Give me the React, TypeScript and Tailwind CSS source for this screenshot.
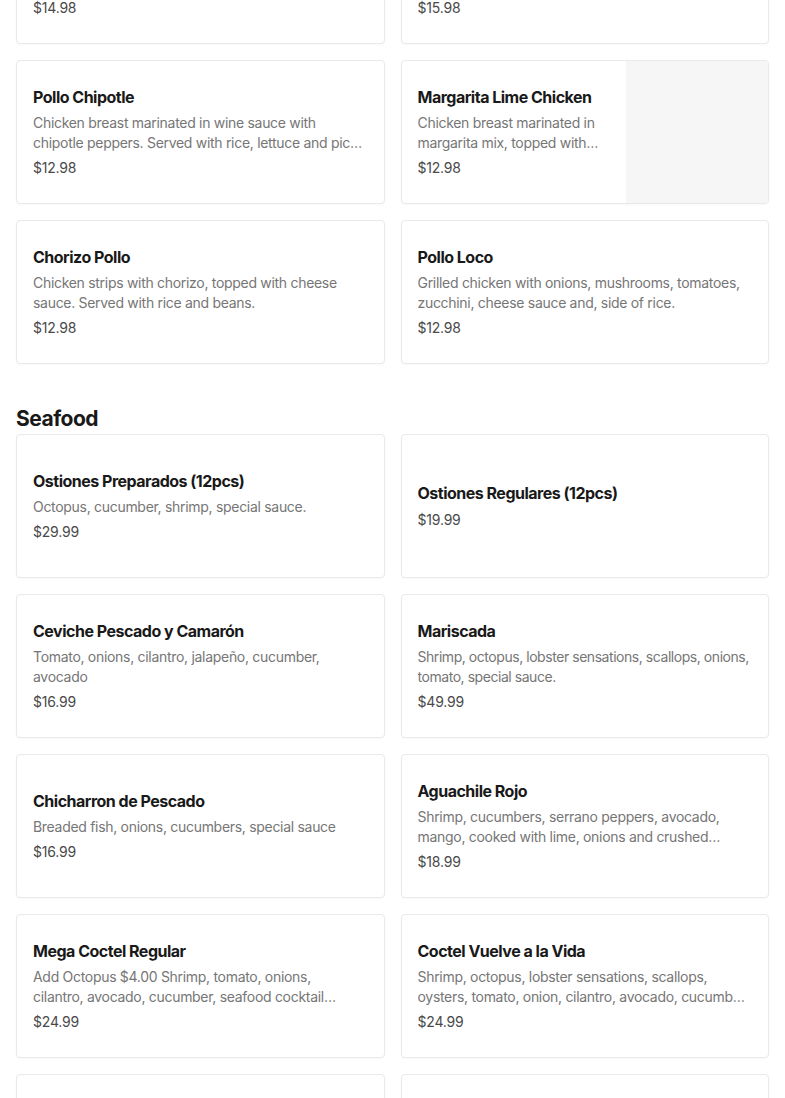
import React from "react";

type Item = { title: string; desc?: string; price: string; image?: boolean; tight?: boolean };

const chicken: Item[] = [
  { title: "Pollo a la Crema", desc: "Chicken strips cooked in a creamy sauce with onions. Served with rice and beans.", price: "$14.98" },
  { title: "Pollo Fundido", desc: "Grilled chicken topped with melted cheese and peppers. Served with rice.", price: "$15.98" },
  { title: "Pollo Chipotle", desc: "Chicken breast marinated in wine sauce with chipotle peppers. Served with rice, lettuce and pico de gallo.", price: "$12.98" },
  { title: "Margarita Lime Chicken", desc: "Chicken breast marinated in margarita mix, topped with shrimp and cheese sauce.", price: "$12.98", image: true },
  { title: "Chorizo Pollo", desc: "Chicken strips with chorizo, topped with cheese sauce. Served with rice and beans.", price: "$12.98" },
  { title: "Pollo Loco", desc: "Grilled chicken with onions, mushrooms, tomatoes, zucchini, cheese sauce and, side of rice.", price: "$12.98" },
];

const seafood: Item[] = [
  { title: "Ostiones Preparados (12pcs)", desc: "Octopus, cucumber, shrimp, special sauce.", price: "$29.99" },
  { title: "Ostiones Regulares (12pcs)", price: "$19.99" },
  { title: "Ceviche Pescado y Camarón", desc: "Tomato, onions, cilantro, jalapeño, cucumber, avocado", price: "$16.99" },
  { title: "Mariscada", desc: "Shrimp, octopus, lobster sensations, scallops, onions, tomato, special sauce.", price: "$49.99", tight: true },
  { title: "Chicharron de Pescado", desc: "Breaded fish, onions, cucumbers, special sauce", price: "$16.99" },
  { title: "Aguachile Rojo", desc: "Shrimp, cucumbers, serrano peppers, avocado, mango, cooked with lime, onions and crushed\nchile.", price: "$18.99" },
  { title: "Mega Coctel Regular", desc: "Add Octopus $4.00 Shrimp, tomato, onions,\ncilantro, avocado, cucumber, seafood cocktail\nsauce.", price: "$24.99" },
  { title: "Coctel Vuelve a la Vida", desc: "Shrimp, octopus, lobster sensations, scallops, oysters, tomato, onion, cilantro, avocado, cucumber, seafood cocktail sauce.", price: "$24.99" },
  { title: "Coctel de Camarón", desc: "Shrimp, tomato, onions, cilantro, avocado, cucumber.", price: "$18.99" },
  { title: "Campechana", desc: "Shrimp, octopus, tomato, onions, cilantro, avocado.", price: "$22.99" },
];

function Card({ item }: { item: Item }) {
  return (
    <div className="flex h-[144px] overflow-hidden rounded-[4px] border border-[#e9e9e9] bg-white shadow-[0_1px_2px_rgba(0,0,0,0.03)]">
      <div className="flex min-w-0 flex-1 flex-col justify-center px-4">
        <div className="-mt-px text-[16px] font-bold leading-[24px] tracking-[-0.5px] text-[#191919]">{item.title}</div>
        {item.desc && (
          <div
            className={
              "mt-[4px] line-clamp-2 whitespace-pre-line text-[14px] leading-[20px] text-[#767676] " +
              (item.tight ? "tracking-[-0.45px]" : "tracking-[-0.3px]")
            }
          >
            {item.desc}
          </div>
        )}
        <div className="mt-[5px] text-[14px] leading-[20px] tracking-[-0.2px] text-[#494949]">{item.price}</div>
      </div>
      {item.image && <div className="w-[142px] shrink-0 bg-[#f6f6f6]" />}
    </div>
  );
}

export default function App() {
  return (
    <div className="h-[1098px] overflow-hidden bg-white" style={{ fontFamily: "Inter, 'Noto Sans', sans-serif" }}>
      <div className="-mt-[100px] px-4">
        <div className="grid grid-cols-2 gap-4">
          {chicken.map((it, i) => (
            <Card key={i} item={it} />
          ))}
        </div>
        <h2 className="mt-[41px] mb-[1px] text-[21px] font-bold leading-[28px] tracking-[-0.5px] text-[#191919]">Seafood</h2>
        <div className="grid grid-cols-2 gap-4">
          {seafood.map((it, i) => (
            <Card key={i} item={it} />
          ))}
        </div>
      </div>
    </div>
  );
}
